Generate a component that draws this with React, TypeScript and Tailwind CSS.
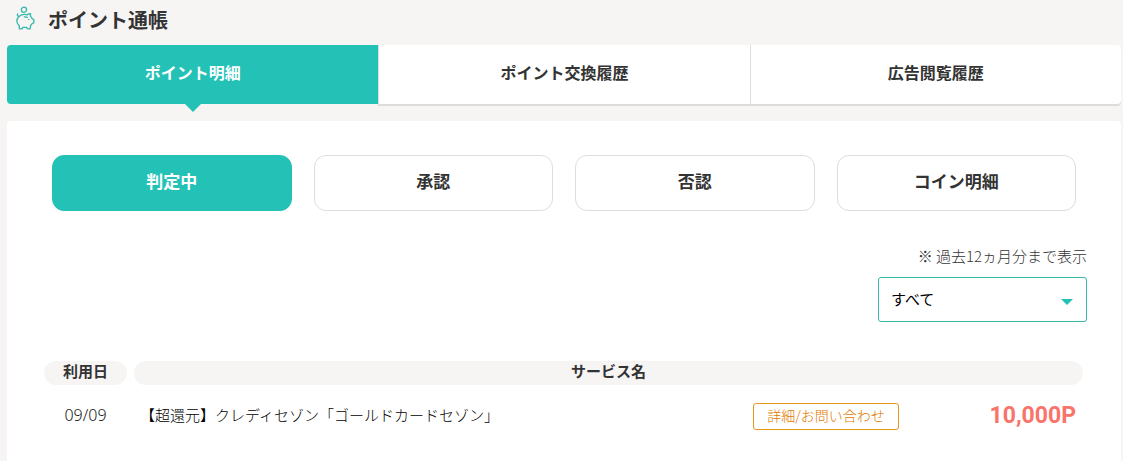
import { useState } from "react";

const tabs = ["ポイント明細", "ポイント交換履歴", "広告閲覧履歴"];
const filters = ["判定中", "承認", "否認", "コイン明細"];

const rows = [
  { date: "09/09", service: "【超還元】クレディセゾン「ゴールドカードセゾン」", points: "10,000P" },
];

function PiggyBank() {
  return (
    <svg viewBox="0 0 20 24" className="h-6 w-5" fill="none" stroke="#34b8aa" strokeWidth="1.3" strokeLinecap="round" strokeLinejoin="round" aria-hidden="true">
      <circle cx="9" cy="3.700" r="2.600" />
      <path d="M2.600 7.900C2 9.200 2.600 10.300 4 10.500M4 10.500C2.400 12 1.700 13.800 1.900 15.500C2.100 17.300 3 18.600 4.200 19.500L4.300 22.800H7.200L7.700 21.400H11.800L12.400 22.800H15.100L15.600 19.600C16.300 19 16.800 18.300 17.200 17.500L18.800 16.900V13.300L17.200 12.800C16.800 11.800 16.200 11 15.400 10.300L15.600 7.600C14.300 7.500 13.200 8 12.400 8.800C9.300 8 6.200 8.500 4 10.500" />
      <path d="M9.300 10.900C10.500 10.700 11.500 10.900 12.400 11.400M13.800 13.300V13.500" />
    </svg>
  );
}

export default function App() {
  const [tab, setTab] = useState(0);
  const [filter, setFilter] = useState(0);

  return (
    <main className="min-h-screen bg-[#f6f5f4] pl-[7px] pr-[2px] font-['Noto_Sans_CJK_JP',sans-serif] text-[15px] text-[#333]">
      <header className="flex h-[45px] items-start gap-[13px] pl-2 pt-[6px]">
        <PiggyBank />
        <h1 className="text-xl leading-7 font-bold">ポイント通帳</h1>
      </header>

      <nav className="grid grid-cols-3">
        {tabs.map((label, i) => (
          <button
            key={label}
            type="button"
            onClick={() => setTab(i)}
            className={
              "relative h-[59px] pb-[5px] text-base font-bold first:rounded-l last:rounded-r " +
              (tab === i
                ? "bg-[#24c2b6] text-white"
                : "border-l border-[#ddd] bg-white shadow-[0_2px_0_#dcdcdc]")
            }
          >
            {label}
            {tab === i && (
              <span className="absolute top-full left-1/2 -ml-2 border-x-8 border-t-8 border-x-transparent border-t-[#24c2b6]" />
            )}
          </button>
        ))}
      </nav>

      <section className="mt-[17px] min-h-[340px] rounded-t bg-white pt-[34px]">
        <div className="grid grid-cols-4 gap-[22px] px-[45px]">
          {filters.map((label, i) => (
            <button
              key={label}
              type="button"
              onClick={() => setFilter(i)}
              className={
                "h-14 rounded-xl border pb-1 text-[17px] font-bold " +
                (filter === i ? "border-[#24c2b6] bg-[#24c2b6] text-white" : "border-[#ddd] bg-white")
              }
            >
              {label}
            </button>
          ))}
        </div>

        <div className="mt-[33px] flex flex-col items-end gap-[9px] pr-[34px]">
          <label htmlFor="period" className="leading-6 font-light text-[#333]">
            ※ 過去12ヵ月分まで表示
          </label>
          <div className="relative w-[209px]">
            <select
              id="period"
              className="h-[45px] w-full appearance-none rounded-[3px] border border-[#34b8aa] bg-white pl-3 text-black"
            >
              <option>すべて</option>
            </select>
            <span className="pointer-events-none absolute top-[22px] right-[14px] border-x-6 border-t-6 border-x-transparent border-t-[#24c2b6]" />
          </div>
        </div>

        <div className="mt-[39px] pr-[31px] pl-[30px]">
          <table className="w-full border-separate border-spacing-x-[7px] border-spacing-y-0">
            <thead>
              <tr className="leading-5">
                <th className="w-[83px] rounded-full bg-[#f6f5f4] pb-1">利用日</th>
                <th colSpan={3} className="rounded-full bg-[#f6f5f4] pb-1">サービス名</th>
              </tr>
            </thead>
            <tbody>
              {rows.map((row) => (
                <tr key={row.service} className="h-[62px]">
                  <td className="pb-[2px] text-center font-['Noto_Sans',sans-serif] text-base font-light text-[#222]">
                    {row.date}
                  </td>
                  <td className="pb-[2px] pl-[6px] font-light text-black">{row.service}</td>
                  <td className="w-[146px]">
                    <a
                      href="#detail"
                      className="block h-[27px] rounded-[3px] border border-[#e8951c] text-center text-sm leading-[23px] font-light text-[#e07800]"
                    >
                      詳細/お問い合わせ
                    </a>
                  </td>
                  <td className="w-[177px] pr-[7px] text-right font-[Roboto,sans-serif] text-[23px] font-bold text-[#f9736b]">
                    {row.points}
                  </td>
                </tr>
              ))}
            </tbody>
          </table>
        </div>
      </section>
    </main>
  );
}
